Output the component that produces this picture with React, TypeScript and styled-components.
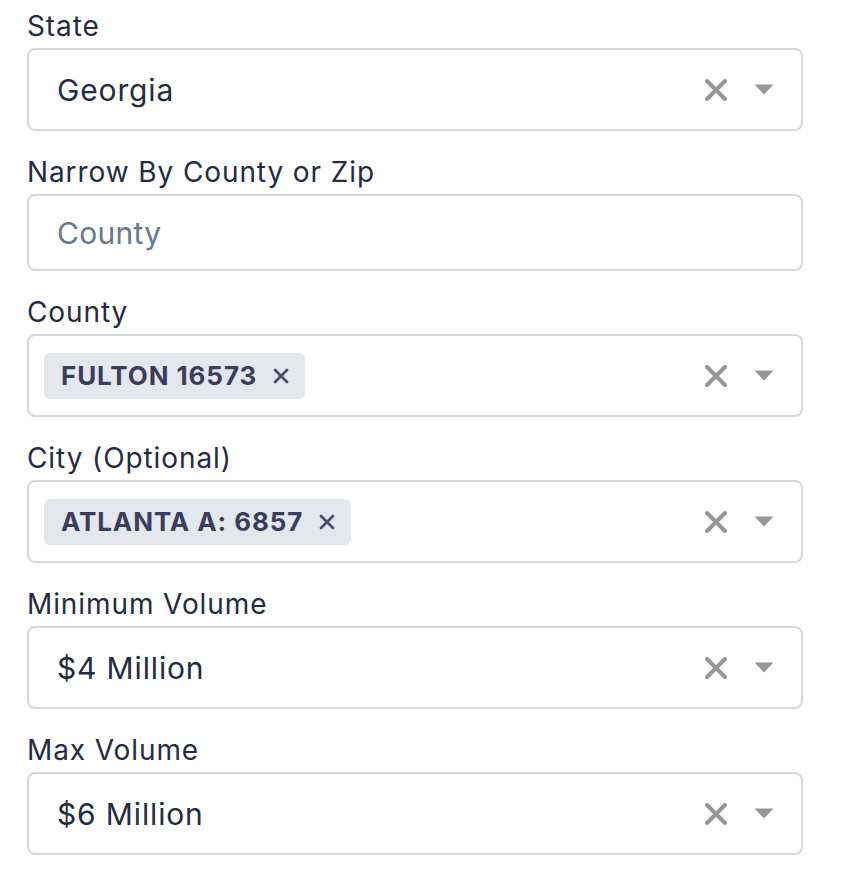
import React from "react";
import styled, { createGlobalStyle } from "styled-components";

const Global = createGlobalStyle`
  html, body { margin: 0; padding: 0; background: #ffffff; }
  body {
    font-family: Inter, "Noto Sans", sans-serif;
    -webkit-font-smoothing: antialiased;
  }
  * { box-sizing: border-box; }
`;

const Form = styled.div`
  width: 842px;
  padding: 8px 39px 0 27px;
  display: flex;
  flex-direction: column;
`;

const Field = styled.div`
  display: flex;
  flex-direction: column;
  margin-bottom: 23px;
`;

const Label = styled.label`
  font-size: 28px;
  line-height: 36px;
  letter-spacing: 0.9px;
  color: #262b40;
  margin-bottom: 4px;
  font-weight: 400;
`;

const Control = styled.div<{ $h?: number }>`
  height: ${(p) => p.$h ?? 83}px;
  border: 2px solid #d5d8dd;
  border-radius: 8px;
  display: flex;
  align-items: center;
  background: #fff;
`;

const ValueArea = styled.div<{ $pad: number }>`
  flex: 1;
  display: flex;
  align-items: center;
  padding-left: ${(p) => p.$pad}px;
`;

const Value = styled.span<{ $placeholder?: boolean }>`
  font-size: 30px;
  letter-spacing: ${(p) => (p.$placeholder ? "0.3px" : "0.85px")};
  color: ${(p) => (p.$placeholder ? "#6b778a" : "#262b40")};
`;

const Chip = styled.div`
  display: flex;
  align-items: center;
  height: 46px;
  background: #e4e7ee;
  border-radius: 6px;
  padding: 0 16px 0 17px;
  gap: 16px;
`;

const ChipText = styled.span`
  font-size: 26px;
  font-weight: 700;
  letter-spacing: 0.9px;
  color: #3a3e5a;
`;

const ChipRemove = styled.span`
  display: flex;
  align-items: center;
  color: #4a4e68;
`;

const Indicators = styled.div`
  display: flex;
  align-items: center;
  padding-right: 13px;
`;

const IndicatorBox = styled.div`
  width: 48px;
  height: 48px;
  display: flex;
  align-items: center;
  justify-content: center;
  color: #969696;
`;

const ClearIcon = () => (
  <svg width="22" height="22" viewBox="0 0 22 22">
    <path d="M2 2 L20 20 M20 2 L2 20" stroke="currentColor" strokeWidth="4" strokeLinecap="round" />
  </svg>
);

const Caret = () => (
  <svg width="20" height="11" viewBox="0 0 20 11">
    <path d="M0.5 0.5 H19.5 L10 10.5 Z" fill="currentColor" />
  </svg>
);

const SmallX = () => (
  <svg width="16" height="16" viewBox="0 0 16 16">
    <path d="M2 2 L14 14 M14 2 L2 14" stroke="currentColor" strokeWidth="2.8" strokeLinecap="round" />
  </svg>
);

type SelectProps = { label: string; value?: string; chip?: string };

const SelectField = ({ label, value, chip }: SelectProps) => (
  <Field>
    <Label>{label}</Label>
    <Control>
      <ValueArea $pad={chip ? 15 : 28}>
        {chip ? (
          <Chip>
            <ChipText>{chip}</ChipText>
            <ChipRemove>
              <SmallX />
            </ChipRemove>
          </Chip>
        ) : (
          <Value>{value}</Value>
        )}
      </ValueArea>
      <Indicators>
        <IndicatorBox>
          <ClearIcon />
        </IndicatorBox>
        <IndicatorBox>
          <Caret />
        </IndicatorBox>
      </Indicators>
    </Control>
  </Field>
);

const InputField = ({ label, placeholder }: { label: string; placeholder: string }) => (
  <Field>
    <Label>{label}</Label>
    <Control $h={77}>
      <ValueArea $pad={28}>
        <Value $placeholder>{placeholder}</Value>
      </ValueArea>
    </Control>
  </Field>
);

export default function App() {
  return (
    <>
      <Global />
      <Form>
        <SelectField label="State" value="Georgia" />
        <InputField label="Narrow By County or Zip" placeholder="County" />
        <SelectField label="County" chip="FULTON 16573" />
        <SelectField label="City (Optional)" chip="ATLANTA A: 6857" />
        <SelectField label="Minimum Volume" value="$4 Million" />
        <SelectField label="Max Volume" value="$6 Million" />
      </Form>
    </>
  );
}
